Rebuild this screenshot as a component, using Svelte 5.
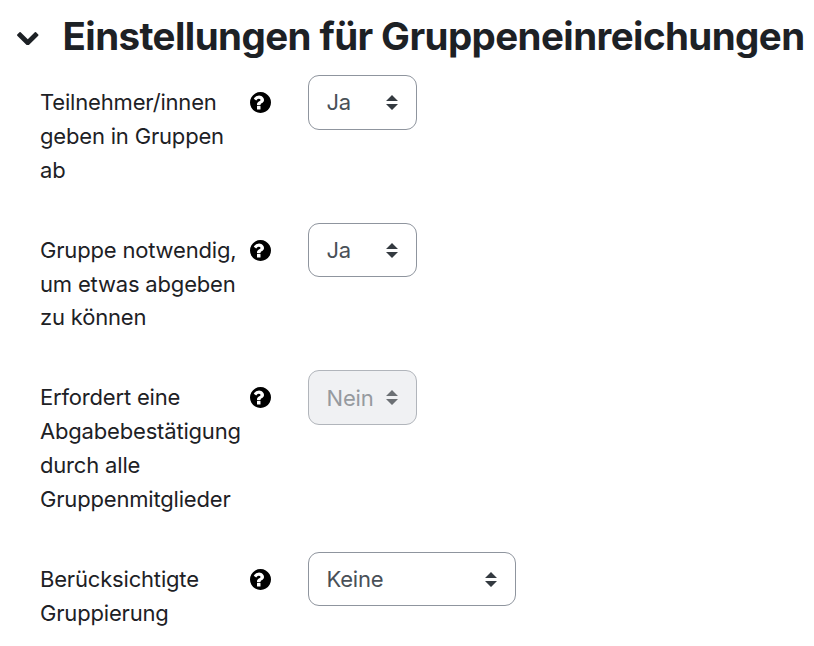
<script>
    let expanded = true;

    const fields = [
        {
            id: 'teamsubmission',
            lines: ['Teilnehmer/innen', 'geben in Gruppen', 'ab'],
            value: 'Ja',
            options: ['Ja', 'Nein'],
        },
        {
            id: 'preventsubmission',
            lines: ['Gruppe notwendig,', 'um etwas abgeben', 'zu können'],
            value: 'Ja',
            options: ['Ja', 'Nein'],
        },
        {
            id: 'requireallmembers',
            lines: ['Erfordert eine', 'Abgabebestätigung', 'durch alle', 'Gruppenmitglieder'],
            value: 'Nein',
            options: ['Ja', 'Nein'],
            disabled: true,
        },
        {
            id: 'grouping',
            lines: ['Berücksichtigte', 'Gruppierung'],
            value: 'Keine',
            options: ['Keine'],
            wide: true,
        },
    ];
</script>

<section class="fieldset">
    <header>
        <button class="toggle" aria-label="Abschnitt umschalten" aria-expanded={expanded} on:click={() => expanded = !expanded}>
            <svg class:closed={!expanded} viewBox="90 533 1612 1035">
                <path d="M1683 808l-742 741q-19 19-45 19t-45-19l-742-741q-19-19-19-45.5t19-45.5l166-165q19-19 45-19t45 19l531 531 531-531q19-19 45-19t45 19l166 165q19 19 19 45.5t-19 45.5z" />
            </svg>
        </button>
        <h3>Einstellungen für Gruppeneinreichungen</h3>
    </header>

    {#if expanded}
        <div class="rows">
            {#each fields as field}
                <div class="row">
                    <label for={field.id}>
                        {#each field.lines as line}
                            <span>{line}</span>
                        {/each}
                    </label>
                    <button class="help" aria-label="Hilfe">
                        <svg viewBox="128 128 1536 1536">
                            <path d="M896 1376v-192q0-14-9-23t-23-9h-192q-14 0-23 9t-9 23v192q0 14 9 23t23 9h192q14 0 23-9t9-23zm256-672q0-88-55.5-163t-138.5-116-170-41q-243 0-371 213-15 24 8 42l132 100q7 6 19 6 16 0 25-12 53-68 86-92 34-24 86-24 48 0 85.5 26t37.5 59q0 38-20 61t-68 45q-63 28-115.5 86.5t-52.5 125.5v36q0 14 9 23t23 9h192q14 0 23-9t9-23q0-19 21.5-49.5t54.5-49.5q32-18 49-28.5t46-35 44.5-48 28-60.5 12.5-81zm512 192q0 209-103 385.5t-279.5 279.5-385.5 103-385.5-103-279.5-279.5-103-385.5 103-385.5 279.5-279.5 385.5-103 385.5 103 279.5 279.5 103 385.5z" />
                        </svg>
                    </button>
                    <div class="select" class:wide={field.wide} class:disabled={field.disabled}>
                        <select id={field.id} disabled={field.disabled} bind:value={field.value}>
                            {#each field.options as option}
                                <option value={option}>{option}</option>
                            {/each}
                        </select>
                        <svg viewBox="0 0 4 5" preserveAspectRatio="none">
                            <path d="M2 0L0 2h4zm0 5L0 3h4z" />
                        </svg>
                    </div>
                </div>
            {/each}
        </div>
    {/if}
</section>

<style>
    :global(body) {
        background: #fff;
    }

    .fieldset {
        font-family: Inter, "Liberation Sans", sans-serif;
        color: #1d2125;
    }

    header {
        display: flex;
        align-items: center;
        height: 75px;
        padding-left: 17px;
    }

    button {
        display: flex;
        padding: 0;
        border: 0;
        background: none;
        cursor: pointer;
    }

    .toggle {
        width: 45.5px;
    }

    .toggle svg {
        width: 21.5px;
        height: 13.8px;
        margin-top: 2px;
        fill: #1d2125;
    }

    .toggle svg.closed {
        transform: rotate(-90deg);
    }

    h3 {
        margin: 0;
        padding-bottom: 3px;
        font-size: 38.5px;
        font-weight: 700;
        line-height: 46px;
        letter-spacing: -0.59px;
        white-space: nowrap;
    }

    .rows {
        display: flex;
        flex-direction: column;
        gap: 35.35px;
        padding-left: 40px;
    }

    .row {
        display: flex;
        align-items: flex-start;
    }

    label {
        width: 210px;
        padding-top: 11.1px;
        font-size: 22px;
        line-height: 33.75px;
        letter-spacing: -0.18px;
        white-space: nowrap;
    }

    label span {
        display: block;
    }

    .help {
        width: 58px;
        padding-top: 17px;
    }

    .help svg {
        width: 21px;
        height: 21px;
        fill: #000;
    }

    .select {
        position: relative;
        width: 109px;
        height: 54.6px;
    }

    .select.wide {
        width: 208px;
    }

    select {
        display: block;
        box-sizing: border-box;
        width: 100%;
        height: 100%;
        padding: 0 0 0 17.5px;
        appearance: none;
        border: 1px solid #8f959e;
        border-radius: 11px;
        background: #fff;
        color: #495057;
        font: inherit;
        font-size: 22px;
        letter-spacing: -0.2px;
    }

    .select svg {
        position: absolute;
        top: 20px;
        right: 19px;
        width: 12px;
        height: 15px;
        fill: #343a40;
        pointer-events: none;
    }

    .disabled select {
        border-color: #b1b5bb;
        background: #f0f1f3;
        color: #969a9f;
        opacity: 1;
    }

    .disabled svg {
        fill: #6c7074;
    }
</style>
